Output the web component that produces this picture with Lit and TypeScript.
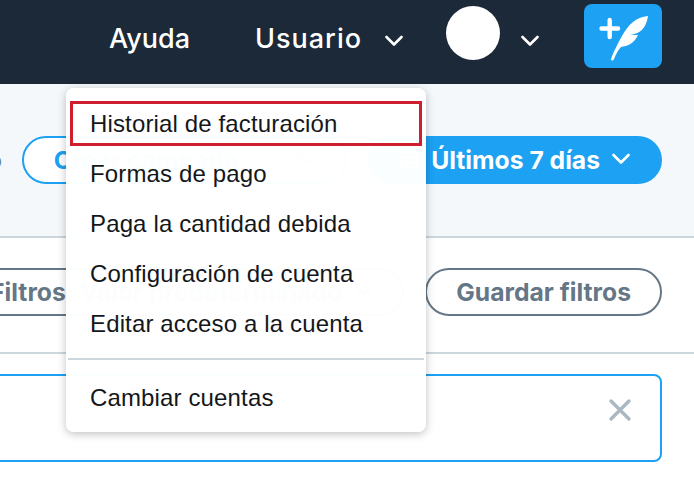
import { LitElement, css, html } from "lit";
import { customElement } from "lit/decorators.js";

const chevron = html`<svg class="chev" viewBox="0 0 18 12" width="18" height="12"><path d="M1.5 2 L9 9.5 L16.5 2" fill="none" stroke="currentColor" stroke-width="2.6" stroke-linecap="round" stroke-linejoin="round"/></svg>`;

@customElement("app-root")
export class AppRoot extends LitElement {
  static styles = css`
    :host {
      display: block;
      position: relative;
      width: 694px;
      height: 480px;
      overflow: hidden;
      background: #fff;
      font-family: "Inter", "Liberation Sans", sans-serif;
    }

    .topbar {
      display: flex;
      align-items: center;
      justify-content: flex-end;
      box-sizing: border-box;
      height: 84px;
      padding: 0 32px 8px 0;
      background: #1c2938;
      color: #fff;
      font-size: 27px;
      font-weight: 500;
    }

    .topbar .chev { margin-top: 5px; }

    .nav-item {
      display: flex;
      align-items: center;
    }

    .help { margin-right: 65px; }

    .user {
      gap: 23px;
      margin-right: 43px;
      letter-spacing: 1px;
    }

    .account {
      gap: 21px;
      margin-right: 45px;
    }

    .avatar {
      width: 54px;
      height: 54px;
      margin-bottom: 10px;
      border-radius: 50%;
      background: #fff;
    }

    .compose {
      width: 78px;
      height: 64px;
      margin-bottom: 4px;
      border-radius: 8px;
      background: #1da1f2;
    }

    .compose svg { display: block; }

    .toolbar {
      display: flex;
      align-items: center;
      justify-content: flex-end;
      gap: 21px;
      height: 152px;
      padding-right: 32px;
      background: #f5f8fa;
      border-bottom: 2px solid #ccd6dd;
      white-space: nowrap;
    }

    .lead {
      flex: none;
      margin-right: -1px;
      color: #657786;
      font-size: 24.7px;
      font-weight: 700;
    }

    .pill {
      display: flex;
      align-items: center;
      flex: none;
      box-sizing: border-box;
      height: 48px;
      border-radius: 24px;
      font-size: 24.7px;
      font-weight: 700;
    }

    .pill .chev { margin-top: -3px; }

    .create {
      padding: 0 30px;
      background: #fff;
      border: 2px solid #1da1f2;
      color: #1da1f2;
    }

    .create .sep {
      width: 1px;
      height: 46px;
      margin: 0 30px 0 28px;
      background: #e6ecf0;
    }

    .date {
      gap: 12px;
      padding: 0 32px;
      background: #1da1f2;
      color: #fff;
    }

    .date .cal { margin-right: 1px; }

    .filters {
      display: flex;
      align-items: center;
      justify-content: flex-end;
      gap: 21px;
      box-sizing: border-box;
      height: 116px;
      padding: 0 32px 6px 0;
      border-bottom: 2px solid #ccd6dd;
      white-space: nowrap;
    }

    .outline {
      gap: 13px;
      padding: 0 29px;
      background: #fff;
      border: 2px solid #657786;
      color: #657786;
    }

    .search-wrap {
      display: flex;
      justify-content: flex-end;
      padding: 20px 32px 0 0;
    }

    .search {
      display: flex;
      align-items: center;
      justify-content: flex-end;
      flex: none;
      box-sizing: border-box;
      width: 760px;
      height: 88px;
      padding: 0 28px 16px 0;
      border: 2px solid #1da1f2;
      border-radius: 8px;
    }

    .menu {
      position: absolute;
      left: 66px;
      top: 88px;
      box-sizing: border-box;
      width: 360px;
      height: 344px;
      padding: 11px 2px 0;
      border-radius: 8px;
      background: rgba(255, 255, 255, 0.985);
      box-shadow: 0 2px 8px rgba(0, 0, 0, 0.25);
      color: #14171a;
      font-family: "Liberation Sans", Arial, sans-serif;
      font-size: 24px;
      letter-spacing: 0.14px;
    }

    .menu-item {
      height: 50px;
      padding-left: 22px;
      line-height: 50px;
      white-space: nowrap;
    }

    .menu-rule {
      height: 2px;
      margin: 9px 0 13px;
      background: #ccd6dd;
    }

    .highlight {
      position: absolute;
      left: 4px;
      top: 13px;
      box-sizing: border-box;
      width: 352px;
      height: 45px;
      border: 3px solid #cf1f2e;
    }
  `;

  render() {
    return html`
      <header class="topbar">
        <span class="help">Ayuda</span>
        <span class="nav-item user">Usuario ${chevron}</span>
        <span class="nav-item account"><span class="avatar"></span>${chevron}</span>
        <span class="compose">
          <svg viewBox="0 0 78 64" width="78" height="64">
            <path d="M17.5 24.5 H34 M25.7 16 V33" stroke="#fff" stroke-width="4.4" stroke-linecap="round" fill="none"/>
            <path d="M64 12 C52 13 44 21 38 32 C33 41 29 49 27 55 C27 57 29 57 30 55 C32 50 34 46 37 43 C43 42 50 40 54 31 L46 31 C54 30 62 26 64 12 Z" fill="#fff"/>
          </svg>
        </span>
      </header>

      <section class="toolbar">
        <span class="lead">o</span>
        <span class="pill create">Crear campaña<span class="sep"></span>${chevron}</span>
        <span class="pill date">
          <svg class="cal" viewBox="0 0 18 16" width="18" height="16">
            <path d="M1 1 H17 V15 H1 Z M1 5 H17 M6.5 5 V15 M11.5 5 V15 M1 10 H17" fill="none" stroke="#fff" stroke-width="1.6"/>
          </svg>
          Últimos 7 días ${chevron}
        </span>
      </section>

      <section class="filters">
        <span class="pill outline">Filtros: Valor predeterminado ${chevron}</span>
        <span class="pill outline">Guardar filtros</span>
      </section>

      <div class="search-wrap">
        <div class="search">
          <svg viewBox="0 0 24 24" width="24" height="24"><path d="M3 3 L21 21 M21 3 L3 21" stroke="#aab8c2" stroke-width="3.4" stroke-linecap="round"/></svg>
        </div>
      </div>

      <nav class="menu">
        <div class="highlight"></div>
        <div class="menu-item">Historial de facturación</div>
        <div class="menu-item">Formas de pago</div>
        <div class="menu-item">Paga la cantidad debida</div>
        <div class="menu-item">Configuración de cuenta</div>
        <div class="menu-item">Editar acceso a la cuenta</div>
        <div class="menu-rule"></div>
        <div class="menu-item">Cambiar cuentas</div>
      </nav>
    `;
  }
}
